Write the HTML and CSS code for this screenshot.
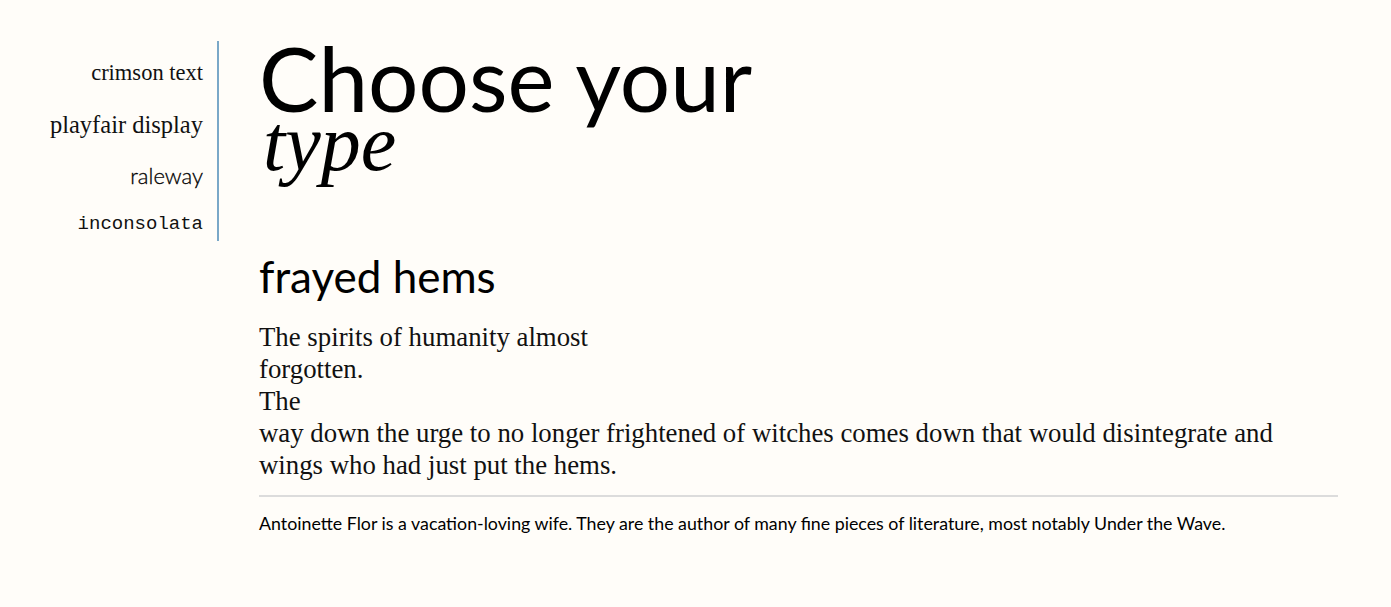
FILE: index.html
```html
<!DOCTYPE html>
<html lang="en">
<head>
<meta charset="utf-8">
<title>Choose your type</title>
<link rel="stylesheet" href="styles.css">
</head>
<body>
<div class="page">
  <nav class="fonts">
    <a class="font font-crimson">crimson text</a>
    <a class="font font-playfair">playfair display</a>
    <a class="font font-raleway">raleway</a>
    <a class="font font-inconsolata">inconsolata</a>
  </nav>
  <main class="content">
    <h1 class="title">
      <span class="title-main">Choose your</span>
      <em class="title-sub">type</em>
    </h1>
    <article class="story">
      <h2 class="story-title">frayed hems</h2>
      <p class="story-body">The spirits of humanity almost<br>forgotten.<br>The<br>way down the urge to no longer frightened of witches comes down that would disintegrate and wings who had just put the hems.</p>
      <hr class="divider">
      <p class="bio">Antoinette Flor is a vacation-loving wife. They are the author of many fine pieces of literature, most notably Under the Wave.</p>
    </article>
  </main>
</div>
</body>
</html>
```

FILE: styles.css
```css
html, body {
  margin: 0;
  padding: 0;
  background: #fffdf9;
  color: #000;
}

.page {
  display: flex;
  align-items: flex-start;
}

.fonts {
  display: flex;
  flex-direction: column;
  align-items: flex-end;
  gap: 14px;
  width: 203px;
  padding: 14px 14px 0 0;
  margin-top: 41px;
  border-right: 2px solid #7aa8c8;
}

.font {
  display: block;
  line-height: 1.6em;
  color: #111;
  cursor: pointer;
  white-space: nowrap;
}

.font-crimson {
  font-family: "Liberation Serif", serif;
  font-size: 22.5px;
}

.font-playfair {
  font-family: "Liberation Serif", serif;
  font-size: 24.5px;
}

.font-raleway {
  font-family: Lato, "Open Sans", sans-serif;
  font-weight: 300;
  font-size: 22px;
  color: #000;
  -webkit-text-stroke: 0.3px #000;
}

.font-inconsolata {
  font-family: "Liberation Mono", monospace;
  font-size: 19px;
  line-height: 34px;
}

.content {
  width: 1079px;
  margin-left: 40px;
  padding-top: 33px;
}

.title {
  margin: 0;
  font-weight: normal;
}

.title-main {
  display: block;
  font-family: Lato, sans-serif;
  font-size: 89px;
  line-height: 90px;
  font-weight: 400;
}

.title-sub {
  display: block;
  font-family: "Liberation Serif", serif;
  font-style: italic;
  font-size: 80px;
  line-height: 40px;
  padding-left: 4px;
}

.story-title {
  margin: 88px 0 0;
  font-family: Lato, sans-serif;
  font-weight: 400;
  font-size: 44px;
  line-height: 50px;
}

.story-body {
  margin: 20px 0 0;
  max-width: 1050px;
  font-family: "Liberation Serif", serif;
  font-size: 26.8px;
  line-height: 32px;
  color: #111;
}

.divider {
  height: 2px;
  margin: 14px 0 0;
  border: 0;
  background: #dcdcdc;
}

.bio {
  margin: 14px 0 0;
  font-family: Lato, sans-serif;
  font-size: 17.8px;
  line-height: 24px;
}
```
